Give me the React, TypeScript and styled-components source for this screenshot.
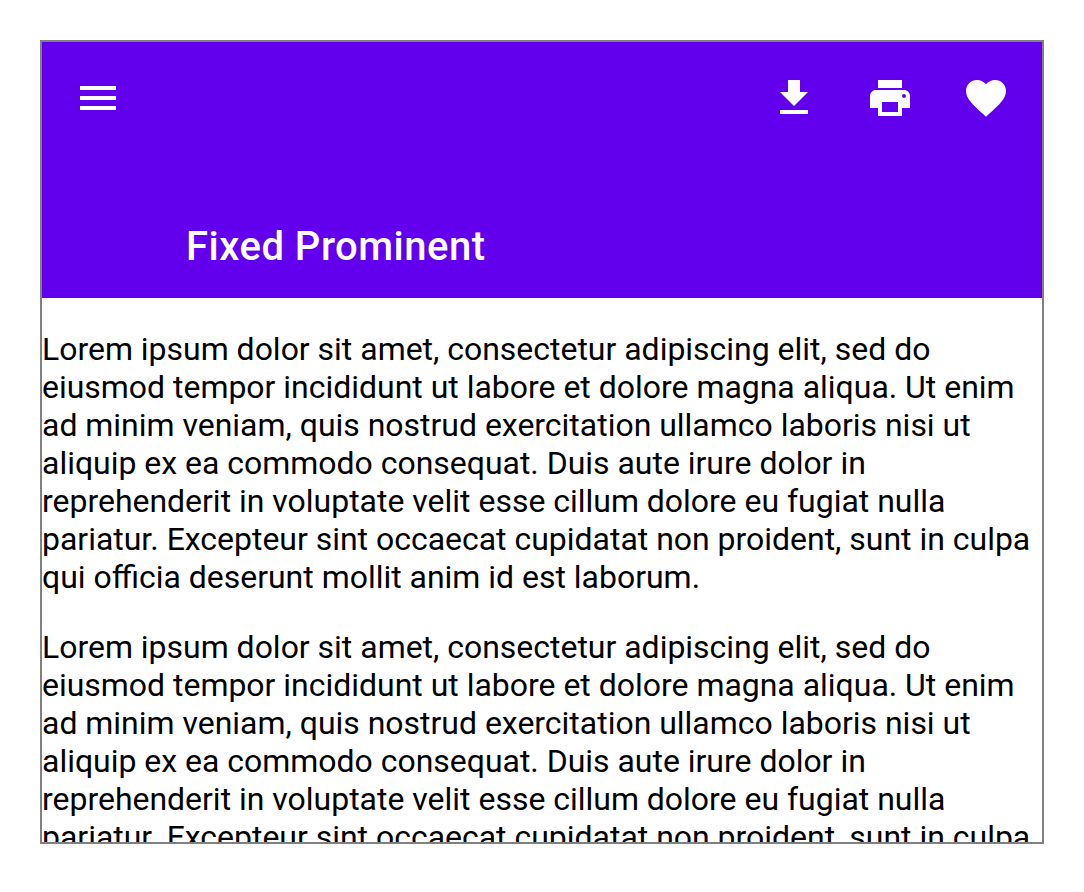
import React from "react";
import styled, { createGlobalStyle } from "styled-components";

const GlobalStyle = createGlobalStyle`
  body { margin: 0; background: #fff; }
`;

const Page = styled.main`
  box-sizing: border-box;
  width: 1084px;
  height: 892px;
  padding: 40px;
  overflow: hidden;
  font-family: Roboto, sans-serif;
`;

const Frame = styled.section`
  box-sizing: border-box;
  width: 1004px;
  height: 804px;
  border: 2px solid #808080;
  overflow: hidden;
`;

const TopAppBar = styled.header`
  box-sizing: border-box;
  display: flex;
  justify-content: space-between;
  height: 256px;
  padding: 8px;
  background: #6200ee;
  color: #fff;
`;

const BarSection = styled.div`
  display: flex;
  align-items: flex-start;
`;

const IconButton = styled.button`
  box-sizing: border-box;
  width: 96px;
  height: 96px;
  padding: 24px;
  border: 0;
  background: transparent;
  color: inherit;

  svg {
    display: block;
    width: 48px;
    height: 48px;
    fill: currentColor;
  }
`;

const Title = styled.h1`
  align-self: flex-end;
  margin: 0;
  padding: 0 0 20px 40px;
  font-size: 40px;
  font-weight: 500;
  line-height: 47px;
  letter-spacing: 0.5px;
  white-space: nowrap;
`;

const Content = styled.div`
  padding-top: 32px;
`;

const Paragraph = styled.p`
  margin: 0 0 32px;
  font-size: 31.96px;
  line-height: 38px;
  color: #000;
`;

const lorem =
  "Lorem ipsum dolor sit amet, consectetur adipiscing elit, sed do eiusmod tempor incididunt ut labore et dolore magna aliqua. Ut enim ad minim veniam, quis nostrud exercitation ullamco laboris nisi ut aliquip ex ea commodo consequat. Duis aute irure dolor in reprehenderit in voluptate velit esse cillum dolore eu fugiat nulla pariatur. Excepteur sint occaecat cupidatat non proident, sunt in culpa qui officia deserunt mollit anim id est laborum.";

const icons = {
  menu: "M3 18h18v-2H3v2zm0-5h18v-2H3v2zm0-7v2h18V6H3z",
  download: "M19 9h-4V3H9v6H5l7 7 7-7zM5 18v2h14v-2H5z",
  print:
    "M19 8H5c-1.66 0-3 1.34-3 3v6h4v4h12v-4h4v-6c0-1.66-1.34-3-3-3zm-3 11H8v-5h8v5zm3-7c-.55 0-1-.45-1-1s.45-1 1-1 1 .45 1 1-.45 1-1 1zm-1-9H6v4h12V3z",
  favorite:
    "M12 21.35l-1.45-1.32C5.4 15.36 2 12.28 2 8.5 2 5.42 4.42 3 7.5 3c1.74 0 3.41.81 4.5 2.09C13.09 3.81 14.76 3 16.5 3 19.58 3 22 5.42 22 8.5c0 3.78-3.4 6.86-8.55 11.54L12 21.35z",
};

function Action({ label, icon }: { label: string; icon: keyof typeof icons }) {
  return (
    <IconButton aria-label={label}>
      <svg viewBox="0 0 24 24" aria-hidden="true">
        <path d={icons[icon]} />
      </svg>
    </IconButton>
  );
}

export default function App() {
  return (
    <>
      <GlobalStyle />
      <Page>
        <Frame>
          <TopAppBar>
            <BarSection>
              <Action label="Menu" icon="menu" />
              <Title>Fixed Prominent</Title>
            </BarSection>
            <BarSection>
              <Action label="Download" icon="download" />
              <Action label="Print" icon="print" />
              <Action label="Favorite" icon="favorite" />
            </BarSection>
          </TopAppBar>
          <Content>
            <Paragraph>{lorem}</Paragraph>
            <Paragraph>{lorem}</Paragraph>
          </Content>
        </Frame>
      </Page>
    </>
  );
}
